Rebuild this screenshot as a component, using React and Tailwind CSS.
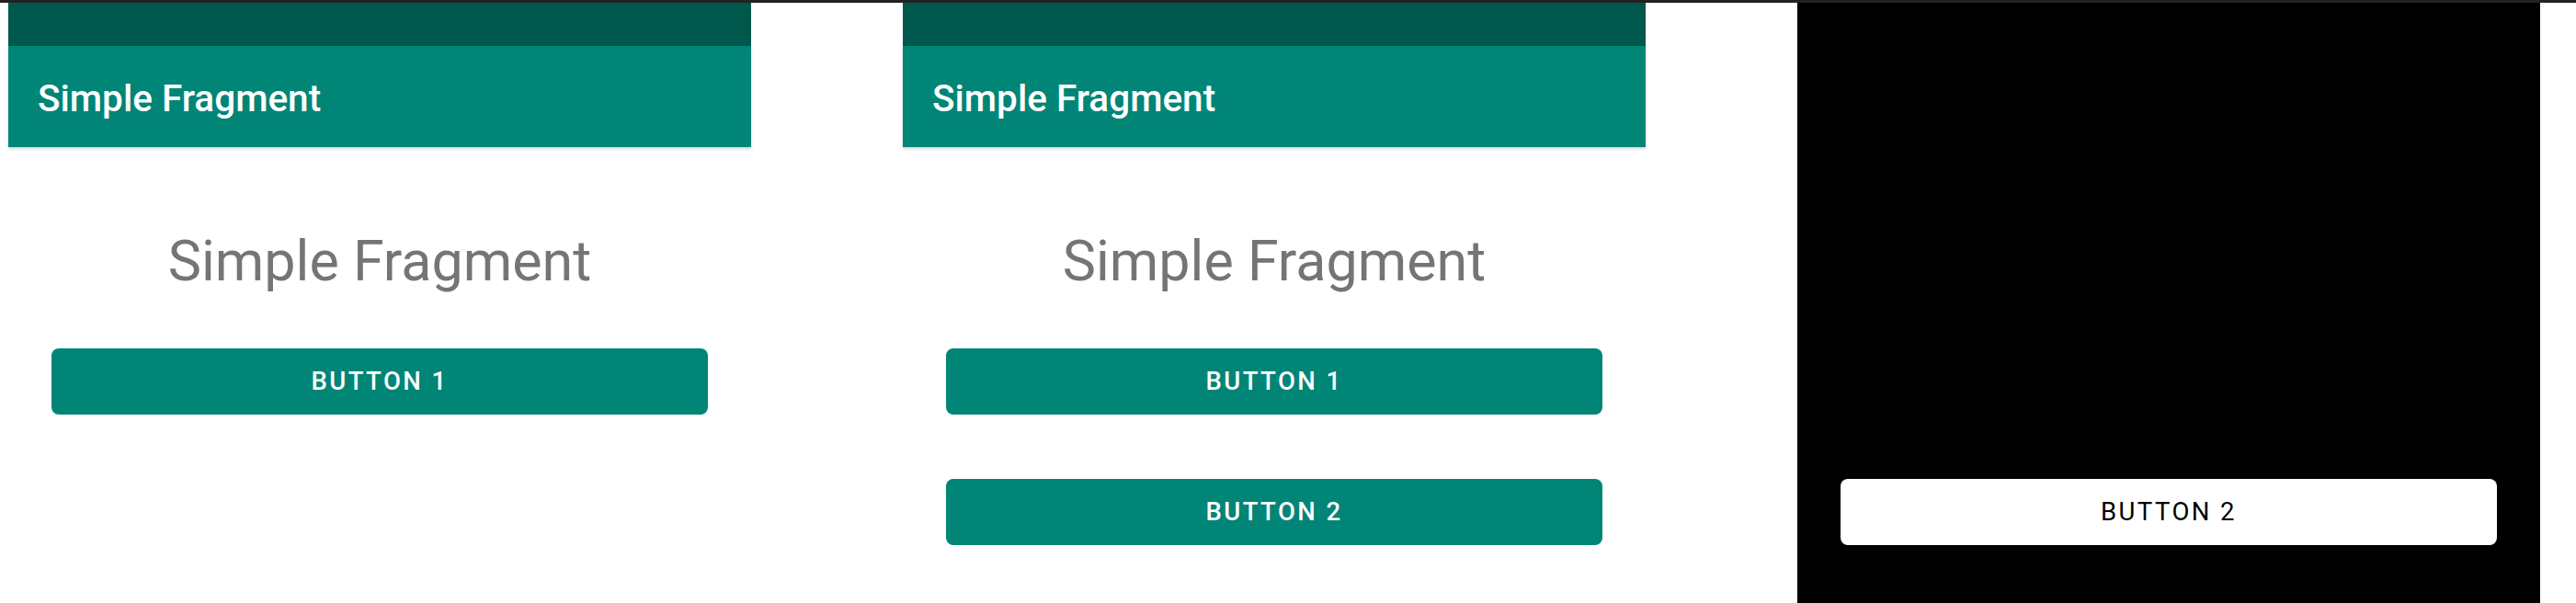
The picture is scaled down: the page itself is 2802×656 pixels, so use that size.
import React from 'react';

const FONT = "font-['Roboto',_'Noto_Sans',_sans-serif]";

function AppBar() {
  return (
    <>
      <div className="h-[47px] bg-[#00574B]" />
      <div className="relative z-10 flex h-[110px] items-center bg-[#008577] pl-[32px] pt-[5px] shadow-[0_2px_3px_rgba(0,0,0,0.18)]">
        <span className="text-[40.5px] font-medium leading-none text-white">Simple Fragment</span>
      </div>
    </>
  );
}

function TealButton({ label }) {
  return (
    <button className="flex h-[72px] w-full items-center justify-center rounded-[8px] bg-[#008577] text-[27.5px] font-medium uppercase tracking-[2.45px] text-white">
      {label}
    </button>
  );
}

function FragmentScreen({ buttons }) {
  return (
    <div className="flex w-[808px] shrink-0 flex-col bg-white">
      <AppBar />
      <p className="mt-[88px] text-center text-[61px] leading-[72px] text-[#757575]">Simple Fragment</p>
      <div className="mt-[59px] flex flex-col gap-[70px] px-[47px]">
        {buttons.map((b) => <TealButton key={b} label={b} />)}
      </div>
    </div>
  );
}

function BlackScreen() {
  return (
    <div className="flex w-[808px] shrink-0 flex-col bg-black px-[47px] pt-[518px]">
      <button className="flex h-[72px] w-full items-center justify-center rounded-[8px] bg-white text-[27.5px] font-normal uppercase tracking-[2.45px] text-black">
        Button 2
      </button>
    </div>
  );
}

export default function App() {
  return (
    <div className={`flex h-[656px] w-[2802px] flex-col overflow-hidden bg-white ${FONT}`}>
      <div className="h-[3px] shrink-0 bg-[#222222]" />
      <div className="flex flex-1 gap-[165px] pl-[9px]">
        <FragmentScreen buttons={['Button 1']} />
        <FragmentScreen buttons={['Button 1', 'Button 2']} />
        <BlackScreen />
      </div>
    </div>
  );
}
